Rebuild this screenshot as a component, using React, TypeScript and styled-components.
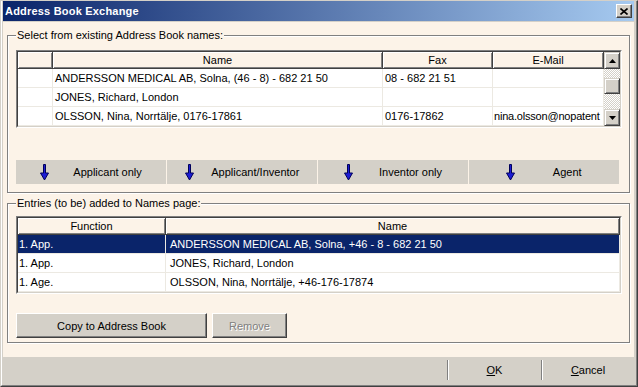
import { FC, Fragment } from "react";
import styled, { createGlobalStyle } from "styled-components";

const GlobalStyle = createGlobalStyle`
  html, body {
    margin: 0;
    padding: 0;
  }
  body {
    font-family: "Liberation Sans", Arial, sans-serif;
    font-size: 11px;
    color: #000;
  }
  * {
    box-sizing: border-box;
  }
`;

interface BookEntry {
  name: string;
  fax: string;
  email: string;
}

interface NameEntry {
  fn: string;
  name: string;
  selected?: boolean;
}

const book: BookEntry[] = [
  { name: "ANDERSSON MEDICAL AB, Solna, (46 - 8) - 682 21 50", fax: "08 - 682 21 51", email: "" },
  { name: "JONES, Richard, London", fax: "", email: "" },
  { name: "OLSSON, Nina, Norrtälje, 0176-17861", fax: "0176-17862", email: "nina.olsson@nopatent" },
];

const entries: NameEntry[] = [
  { fn: "1. App.", name: "ANDERSSON MEDICAL AB, Solna, +46 - 8 - 682 21 50", selected: true },
  { fn: "1. App.", name: "JONES, Richard, London" },
  { fn: "1. Age.", name: "OLSSON, Nina, Norrtälje, +46-176-17874" },
];

const roles = ["Applicant only", "Applicant/Inventor", "Inventor only", "Agent"];

const ArrowDown: FC = () => (
  <svg width="9" height="17" viewBox="-0.5 -0.5 9 17">
    <path d="M3 0h2v8.5h3l-4 7l-4-7h3z" fill="#1c1cd4" stroke="#00005a" strokeWidth="1" />
  </svg>
);

const Triangle: FC<{ down?: boolean }> = ({ down }) => (
  <svg width="7" height="4" viewBox="0 0 7 4">
    <path d={down ? "M0 0h7l-3.5 4z" : "M3.5 0l3.5 4h-7z"} fill="#000" />
  </svg>
);

export default function App() {
  return (
    <>
      <GlobalStyle />
      <Window>
        <Frame>
          <TitleBar>
            <TitleText>Address Book Exchange</TitleText>
            <CloseButton>
              <svg width="8" height="7" viewBox="0 0 8 7">
                <path d="M0.5 0.5l7 6M7.5 0.5l-7 6" stroke="#000" strokeWidth="1.6" />
              </svg>
            </CloseButton>
          </TitleBar>

          <Body>
            <Group>
              <Caption>Select from existing Address Book names:</Caption>
              <TableFrame>
                <TableInner>
                  <Grid $cols="35px 330px 110px 1fr">
                    <HeadCell />
                    <HeadCell>Name</HeadCell>
                    <HeadCell>Fax</HeadCell>
                    <HeadCell>E-Mail</HeadCell>
                    {book.map((b) => (
                      <Fragment key={b.name}>
                        <Cell />
                        <Cell>{b.name}</Cell>
                        <Cell>{b.fax}</Cell>
                        <EmailCell>{b.email}</EmailCell>
                      </Fragment>
                    ))}
                  </Grid>
                  <ScrollBar>
                    <ScrollButton>
                      <Triangle />
                    </ScrollButton>
                    <Thumb />
                    <ScrollButton $end>
                      <Triangle down />
                    </ScrollButton>
                  </ScrollBar>
                </TableInner>
              </TableFrame>

              <RoleBar>
                {roles.map((r) => (
                  <RoleButton key={r}>
                    <ArrowDown />
                    <span>{r}</span>
                  </RoleButton>
                ))}
              </RoleBar>
            </Group>

            <Group $second>
              <Caption>Entries (to be) added to Names page:</Caption>
              <TableFrame>
                <TableInner>
                  <Grid $cols="148px 1fr">
                    <HeadCell>Function</HeadCell>
                    <HeadCell>Name</HeadCell>
                    {entries.map((e) => (
                      <Fragment key={e.name}>
                        <Cell $selected={e.selected} $pad={1}>
                          {e.fn}
                        </Cell>
                        <Cell $selected={e.selected} $pad={4}>
                          {e.name}
                        </Cell>
                      </Fragment>
                    ))}
                  </Grid>
                </TableInner>
              </TableFrame>

              <PushRow>
                <PushButton $width={191}>Copy to Address Book</PushButton>
                <PushButton $width={75} disabled>
                  Remove
                </PushButton>
              </PushRow>
            </Group>
          </Body>

          <Footer>
            <FooterSpacer />
            <FooterCell $width={94}>
              <u>O</u>K
            </FooterCell>
            <FooterCell $width={93}>
              <u>C</u>ancel
            </FooterCell>
          </Footer>
        </Frame>
      </Window>
    </>
  );
}

const Window = styled.div`
  width: 638px;
  height: 387px;
  border: 1px solid;
  border-color: #d4d0c8 #404040 #404040 #d4d0c8;
  background: #d4d0c8;
`;

const Frame = styled.div`
  height: 100%;
  display: flex;
  flex-direction: column;
  border-left: 1px solid #fff;
  border-right: 1px solid #808080;
  border-bottom: 1px solid #808080;
  padding: 0 2px 2px 1px;
`;

const TitleBar = styled.div`
  height: 20px;
  margin-bottom: 1px;
  padding: 0 2px;
  display: flex;
  align-items: center;
  background: linear-gradient(to right, #0a246a, #a6caf0);
`;

const TitleText = styled.div`
  flex: 1;
  color: #fff;
  font-weight: bold;
  font-size: 11px;
  letter-spacing: 0.2px;
`;

const CloseButton = styled.div`
  width: 16px;
  height: 14px;
  display: flex;
  align-items: center;
  justify-content: center;
  background: #d4d0c8;
  border: 1px solid;
  border-color: #fff #404040 #404040 #fff;
  box-shadow: inset -1px -1px 0 #808080;
`;

const Body = styled.div`
  flex: 1;
  background: #fcf3e8;
  padding: 13px 4px 0 4px;
  display: flex;
  flex-direction: column;
`;

const Group = styled.div<{ $second?: boolean }>`
  position: relative;
  margin-top: ${({ $second }) => ($second ? "10px" : "0")};
  padding: ${({ $second }) => ($second ? "12px 7px 4px 8px" : "14px 7px 8px 8px")};
  border: 1px solid #808080;
  box-shadow: 1px 1px 0 #fff, inset 1px 1px 0 #fff;
`;

const Caption = styled.div`
  position: absolute;
  top: -7px;
  left: 8px;
  padding: 0 1px;
  line-height: 13px;
  background: #fcf3e8;
`;

const TableFrame = styled.div`
  border: 1px solid;
  border-color: #808080 #fff #fff #808080;
`;

const TableInner = styled.div`
  display: flex;
  background: #fff;
  border: 1px solid;
  border-color: #404040 #d4d0c8 #d4d0c8 #404040;
`;

const Grid = styled.div<{ $cols: string }>`
  flex: 1;
  min-width: 0;
  display: grid;
  grid-template-columns: ${({ $cols }) => $cols};
  grid-template-rows: 17px;
  grid-auto-rows: 19px;
`;

const HeadCell = styled.div`
  background: #fcf3e8;
  border-right: 1px solid #404040;
  border-bottom: 1px solid #404040;
  box-shadow: inset 1px 1px 0 #fff, inset -1px -1px 0 #808080;
  text-align: center;
  line-height: 16px;
  white-space: nowrap;
  overflow: hidden;
`;

const Cell = styled.div<{ $selected?: boolean; $pad?: number }>`
  background: ${({ $selected }) => ($selected ? "#0a246a" : "#fff")};
  color: ${({ $selected }) => ($selected ? "#fff" : "#000")};
  border-right: 1px solid #ece9e2;
  border-bottom: 1px solid #ece9e2;
  padding: 0 ${({ $pad }) => $pad ?? 2}px;
  line-height: 18px;
  white-space: nowrap;
  overflow: hidden;
`;

const EmailCell = styled(Cell)`
  padding: 0 1px;
  letter-spacing: -0.2px;
`;

const ScrollBar = styled.div`
  width: 16px;
  display: flex;
  flex-direction: column;
  background-color: #fff;
  background-image: repeating-conic-gradient(#d4d0c8 0 25%, #fff 0 50%);
  background-size: 2px 2px;
`;

const ScrollButton = styled.div<{ $end?: boolean }>`
  height: 17px;
  margin-top: ${({ $end }) => ($end ? "auto" : "0")};
  display: flex;
  align-items: center;
  justify-content: center;
  background: #d4d0c8;
  border: 1px solid;
  border-color: #d4d0c8 #404040 #404040 #d4d0c8;
  box-shadow: inset 1px 1px 0 #fff, inset -1px -1px 0 #808080;
`;

const Thumb = styled.div`
  height: 16px;
  margin-top: 9px;
  background: #d4d0c8;
  border: 1px solid;
  border-color: #d4d0c8 #404040 #404040 #d4d0c8;
  box-shadow: inset 1px 1px 0 #fff, inset -1px -1px 0 #808080;
`;

const RoleBar = styled.div`
  margin-top: 32px;
  display: grid;
  grid-template-columns: repeat(4, 150px);
  gap: 1px;
`;

const RoleButton = styled.button`
  height: 24px;
  padding: 0;
  border: none;
  background: #d4d0c8;
  font: inherit;
  color: #000;
  display: flex;
  align-items: center;
  justify-content: space-evenly;
`;

const PushRow = styled.div`
  margin-top: 19px;
  display: flex;
  gap: 5px;
`;

const PushButton = styled.button<{ $width: number }>`
  width: ${({ $width }) => $width}px;
  height: 25px;
  padding: 0;
  font: inherit;
  color: #000;
  background: #d4d0c8;
  border: 1px solid;
  border-color: #fff #404040 #404040 #fff;
  box-shadow: inset -1px -1px 0 #808080;

  &:disabled {
    color: #808080;
    text-shadow: 1px 1px 0 #fff;
  }
`;

const Footer = styled.div`
  height: 26px;
  display: flex;
  background: #d4d0c8;
`;

const FooterSpacer = styled.div`
  flex: 1;
`;

const FooterCell = styled.div<{ $width: number }>`
  width: ${({ $width }) => $width}px;
  margin: 3px 0;
  border-left: 1px solid #808080;
  box-shadow: inset 1px 0 0 #fff;
  display: flex;
  align-items: center;
  justify-content: center;
`;
